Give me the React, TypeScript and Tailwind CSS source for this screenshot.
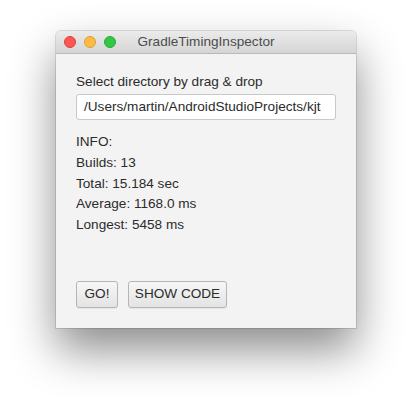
import React from "react";

export default function App() {
  const font = { fontFamily: '"Liberation Sans", Arial, sans-serif' };
  return (
    <div className="w-[412px] h-[409px] bg-white overflow-hidden" style={font}>
      <div className="ml-[56px] mt-[31px] w-[300px] h-[297px] rounded-t-[5px] flex flex-col bg-[#f3f3f3] shadow-[0_22px_45px_rgba(0,0,0,0.45),0_0_0_1px_rgba(0,0,0,0.12)]">
        <div className="relative h-[23px] rounded-t-[5px] bg-gradient-to-b from-[#ebebeb] to-[#d5d5d5] border-b border-[#b9b9b9] flex items-center justify-center">
          <div className="absolute left-[8px] top-[5px] flex gap-[8px]">
            <div className="w-[12px] h-[12px] rounded-full bg-[#fc5753] border border-[#de3f3a]" />
            <div className="w-[12px] h-[12px] rounded-full bg-[#fdbc40] border border-[#dea033]" />
            <div className="w-[12px] h-[12px] rounded-full bg-[#33c748] border border-[#27aa35]" />
          </div>
          <span className="text-[13.6px] text-[#4d4d4d] leading-none">GradleTimingInspector</span>
        </div>
        <div className="flex flex-col flex-1 px-[20px] pt-[18px] text-[13.6px] text-[#2b2b2b]">
          <div className="leading-[20px] h-[20px]">Select directory by drag &amp; drop</div>
          <div className="mt-[2px] h-[26px] w-[260px] bg-white border border-[#c8c8c8] rounded-[3px] overflow-hidden whitespace-nowrap flex items-center pl-[7px] pr-[2px]">
            <span className="leading-none">/Users/martin/AndroidStudioProjects/kjt</span>
          </div>
          <div className="mt-[12px] flex flex-col">
            <div className="h-[20.75px] leading-[20.75px]">INFO:</div>
            <div className="h-[20.75px] leading-[20.75px]">Builds: 13</div>
            <div className="h-[20.75px] leading-[20.75px]">Total: 15.184 sec</div>
            <div className="h-[20.75px] leading-[20.75px]">Average: 1168.0 ms</div>
            <div className="h-[20.75px] leading-[20.75px]">Longest: 5458 ms</div>
          </div>
          <div className="mt-[45px] flex gap-[10px]">
            <button className="h-[27px] w-[42px] rounded-[3px] border border-[#b5b5b5] bg-gradient-to-b from-[#f7f7f7] to-[#e3e3e3] text-[13.6px] text-[#2b2b2b] flex items-center justify-center shadow-[0_1px_0_rgba(0,0,0,0.05)]">
              GO!
            </button>
            <button className="h-[27px] w-[99px] rounded-[3px] border border-[#b5b5b5] bg-gradient-to-b from-[#f7f7f7] to-[#e3e3e3] text-[13.6px] text-[#2b2b2b] flex items-center justify-center shadow-[0_1px_0_rgba(0,0,0,0.05)]">
              SHOW CODE
            </button>
          </div>
        </div>
      </div>
    </div>
  );
}
